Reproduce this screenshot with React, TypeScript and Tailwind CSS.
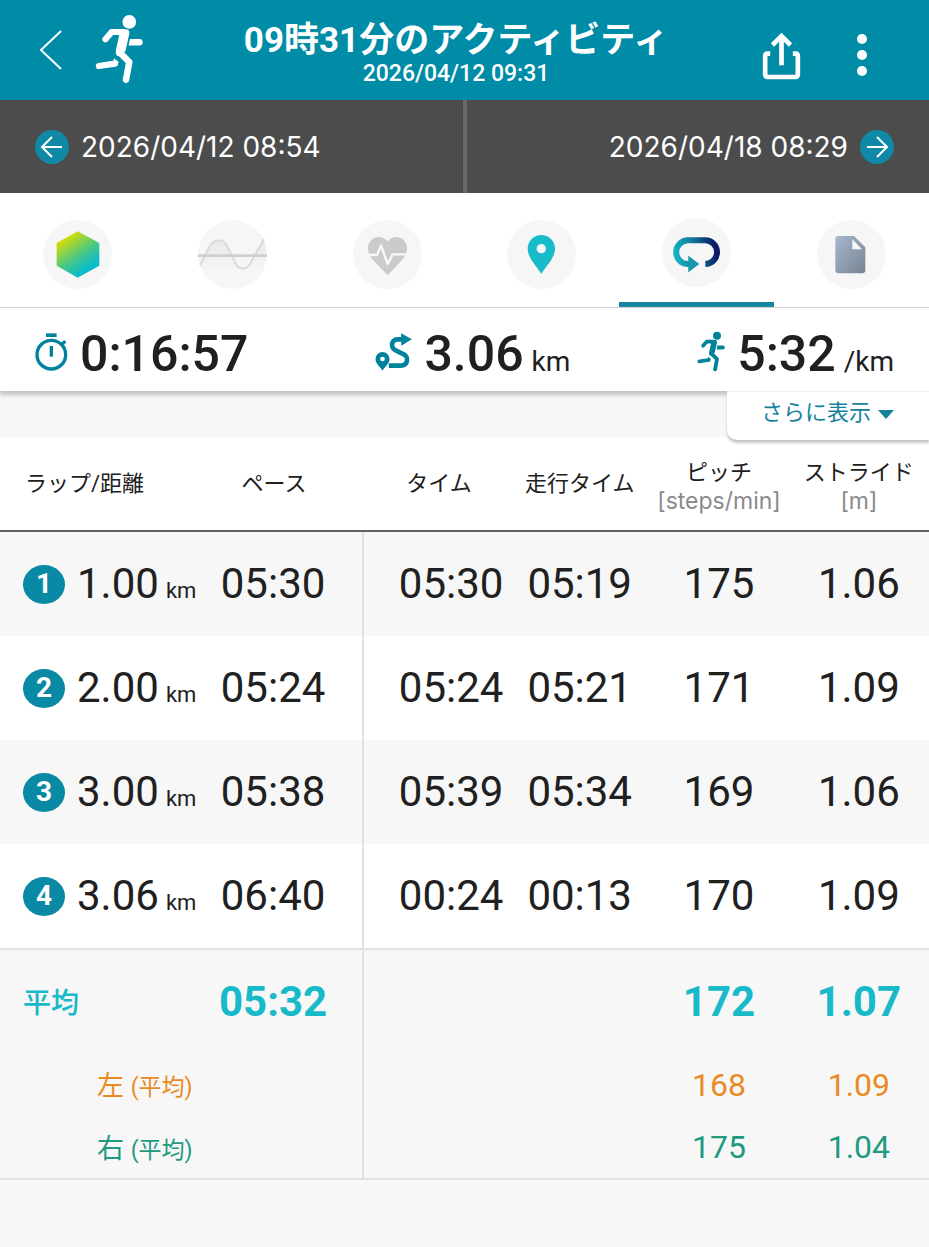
import React from 'react';

type Lap = {
  lap: number;
  distance: string;
  pace: string;
  time: string;
  runTime: string;
  pitch: string;
  stride: string;
};

const laps: Lap[] = [
  { lap: 1, distance: '1.00', pace: '05:30', time: '05:30', runTime: '05:19', pitch: '175', stride: '1.06' },
  { lap: 2, distance: '2.00', pace: '05:24', time: '05:24', runTime: '05:21', pitch: '171', stride: '1.09' },
  { lap: 3, distance: '3.00', pace: '05:38', time: '05:39', runTime: '05:34', pitch: '169', stride: '1.06' },
  { lap: 4, distance: '3.06', pace: '06:40', time: '00:24', runTime: '00:13', pitch: '170', stride: '1.09' },
];

const sides = [
  { label: '左', pitch: '168', stride: '1.09', color: 'text-[#ea8a24]' },
  { label: '右', pitch: '175', stride: '1.04', color: 'text-[#1f9a80]' },
];

const RunnerIcon = ({ className }: { className: string }) => (
  <svg viewBox="284 42 147 212" className={className} fill="none" stroke="currentColor" strokeLinecap="round" strokeLinejoin="round" aria-hidden="true">
    <circle cx="389" cy="65" r="21" fill="currentColor" stroke="none" />
    <path d="M316 118 L335 96 H372" strokeWidth="19" />
    <path d="M352 88 H382 Q391 90 389 101 L377 155 L352 170 Q345 162 348 152 L358 106 Z" fill="currentColor" stroke="none" />
    <path d="M359 158 L389 188 L379 242" strokeWidth="20" />
    <path d="M296 200 L345 193" strokeWidth="19" />
    <path d="M342 176 L357 188 L350 200 L338 198 Z" fill="currentColor" stroke="none" />
    <path d="M391 117 H420 A10 10 0 0 1 420 137 H387 Z" fill="currentColor" stroke="none" />
  </svg>
);

const StopwatchIcon = () => (
  <svg viewBox="104 402 99 114" className="h-[38px] w-[33px]" fill="none" stroke="currentColor" aria-hidden="true">
    <circle cx="153" cy="467" r="43" strokeWidth="10" />
    <path d="M137 408.500 H169" strokeWidth="11" />
    <path d="M153 441 V473" strokeWidth="10" />
    <path d="M184 436 L195 427" strokeWidth="10" />
  </svg>
);

const RouteIcon = () => (
  <svg viewBox="199 402 110 114" className="h-[38px] w-[37px]" fill="none" stroke="currentColor" aria-hidden="true">
    <path d="M221 459 a21 21 0 0 1 21 21 c0 14 -13 22 -21 35 c-8 -13 -21 -21 -21 -35 a21 21 0 0 1 21 -21 Z M221 473 a7 7 0 1 0 0 14 a7 7 0 0 0 0 -14 Z" fill="currentColor" fillRule="evenodd" stroke="none" />
    <path d="M240 500 H276 C298 500 301 472 283 465 L262 455 C243 446 247 421 266 421 H280" strokeWidth="14" />
    <path d="M277 403 L309 421 L277 440 Z" fill="currentColor" stroke="none" />
  </svg>
);

const Disc = ({ children }: { children: React.ReactNode }) => (
  <svg viewBox="0 0 207 207" className="h-[69px] w-[69px]" fill="none" aria-hidden="true">
    <circle cx="103.5" cy="103.5" r="103.5" fill="#f6f6f6" />
    {children}
  </svg>
);

const OverviewIcon = () => (
  <Disc>
    <defs>
      <linearGradient id="hex" x1="0.2" y1="0.05" x2="0.75" y2="0.9">
        <stop offset="0.1" stopColor="#cfdc0c" />
        <stop offset="0.55" stopColor="#4cc881" />
        <stop offset="0.9" stopColor="#0bbccb" />
      </linearGradient>
    </defs>
    <path d="M104 34 L169 69 V137 L104 173 L41 137 V69 Z" fill="url(#hex)" />
  </Disc>
);

const WaveIcon = () => (
  <Disc>
    <defs>
      <linearGradient id="wave" x1="0" y1="0" x2="0" y2="1">
        <stop offset="0" stopColor="#e8e8e8" />
        <stop offset="1" stopColor="#f6f6f6" />
      </linearGradient>
    </defs>
    <path d="M6 136 L34 80 C46 56 76 56 86 76 L110 124 C120 152 146 152 158 128 L198 57 L206 104 L194 154 H14 Z" fill="url(#wave)" />
    <path d="M6 136 L34 80 C46 56 76 56 86 76 L110 124 C120 152 146 152 158 128 L198 57" stroke="#dadada" strokeWidth="6" />
    <path d="M0 107 H207" stroke="#cfcfcf" strokeWidth="8" />
  </Disc>
);

const HeartIcon = () => (
  <Disc>
    <path d="M104 166 L58 118 C49 108 45 98 45 84 C45 54 84 38 104 65 C124 38 162 54 162 84 C162 98 158 108 149 118 Z" fill="#cbcbcb" />
    <path d="M45 105 H72 L84 76 L104 132 L119 103 H164" stroke="#f8f8f8" strokeWidth="7" strokeLinejoin="round" />
  </Disc>
);

const PinIcon = () => (
  <Disc>
    <path d="M103 45 a41 41 0 0 1 41 41 C144 112 120 136 103 161 C86 136 62 112 62 86 A41 41 0 0 1 103 45 Z M103 72 a14 14 0 1 0 0 28 a14 14 0 0 0 0 -28 Z" fill="#18bbca" fillRule="evenodd" />
  </Disc>
);

const LapIcon = () => (
  <Disc>
    <defs>
      <linearGradient id="lap" gradientUnits="userSpaceOnUse" x1="34" y1="120" x2="173" y2="90">
        <stop offset="0" stopColor="#16b9c6" />
        <stop offset="0.45" stopColor="#127f9f" />
        <stop offset="0.9" stopColor="#0b1c66" />
      </linearGradient>
    </defs>
    <path d="M130 138 A35.500 35.500 0 0 0 129 67 H78 a35.500 35.500 0 0 0 0 71 h4" stroke="url(#lap)" strokeWidth="18" />
    <path d="M79 113 L112 138 L79 163 Z" fill="#1696ad" />
  </Disc>
);

const MemoIcon = () => (
  <Disc>
    <defs>
      <linearGradient id="memo" x1="0" y1="0" x2="1" y2="1">
        <stop offset="0" stopColor="#a6b7d0" />
        <stop offset="1" stopColor="#778491" />
      </linearGradient>
    </defs>
    <path d="M65 48 H111 L145 82 V150 Q145 160 135 160 H65 Q55 160 55 150 V58 Q55 48 65 48 Z" fill="url(#memo)" />
    <path d="M106 58 L135 88 H106 Z" fill="#f8f8f8" />
  </Disc>
);

const tabs = [
  { label: '概要', icon: <OverviewIcon /> },
  { label: 'グラフ', icon: <WaveIcon /> },
  { label: '心拍', icon: <HeartIcon /> },
  { label: '地図', icon: <PinIcon /> },
  { label: 'ラップ', icon: <LapIcon /> },
  { label: 'メモ', icon: <MemoIcon /> },
];

const ArrowDisc = ({ d }: { d: string }) => (
  <svg viewBox="0 0 34 34" className="h-[34px] w-[34px]" fill="none" aria-hidden="true">
    <circle cx="17" cy="17" r="17" fill="#0f89a6" />
    <path d={d} stroke="white" strokeWidth="2" />
  </svg>
);

const Header = () => (
  <header className="flex h-[100px] items-start bg-[#008ba7] text-white">
    <div className="flex w-[150px] items-start pt-3.5 pl-[39px]">
      <button type="button" aria-label="戻る" className="pt-4">
        <svg viewBox="0 0 23 40" className="h-10 w-[23px]" fill="none" stroke="currentColor" strokeWidth="2" aria-hidden="true">
          <path d="M22 1 L2 20 L22 39" />
        </svg>
      </button>
      <RunnerIcon className="ml-[33px] h-[70px] w-12" />
    </div>
    <div className="flex-1 pt-[23px] text-center whitespace-nowrap">
      <h1 className="text-[35px] leading-9 font-bold">09時31分のアクティビティ</h1>
      <p className="text-[23px] leading-[30px] font-medium">2026/04/12 09:31</p>
    </div>
    <div className="flex w-[167px] items-center gap-[55px] pt-8">
      <button type="button" aria-label="共有">
        <svg viewBox="215 95 116 144" className="h-12 w-[39px]" fill="none" stroke="currentColor" strokeWidth="14" aria-hidden="true">
          <path d="M239 160 H231 Q224 160 224 167 V222 Q224 230 232 230 H314 Q322 230 322 222 V167 Q322 160 315 160 H307" />
          <path d="M273 195 V108 M246 134 L273 107 L300 134" />
        </svg>
      </button>
      <button type="button" aria-label="メニュー">
        <svg viewBox="0 0 12 48" className="h-12 w-3" fill="currentColor" aria-hidden="true">
          <circle cx="6" cy="7" r="5" />
          <circle cx="6" cy="23" r="5" />
          <circle cx="6" cy="39" r="5" />
        </svg>
      </button>
    </div>
  </header>
);

const Stat = ({ icon, value, unit }: { icon: React.ReactNode; value: string; unit?: string }) => (
  <div className="flex items-center gap-3 text-[#00819c]">
    {icon}
    <p className="flex items-baseline gap-2 pt-1 text-[50px] leading-[60px] font-medium text-[#202020]">
      {value}
      {unit && <span className="text-[28px] leading-none font-normal">{unit}</span>}
    </p>
  </div>
);

const App: React.FC = () => {
  return (
    <div className="min-h-screen bg-[#f7f7f7] font-[Roboto,'Noto_Sans_CJK_JP',sans-serif] text-[#202020]">
      <Header />

      <nav className="flex h-[93px] bg-[#4c4c4c] font-[Inter,sans-serif] text-[28px] text-white">
        <a href="#prev" className="flex flex-1 items-center gap-3 border-r-4 border-[#686868] pl-[35px]">
          <ArrowDisc d="M27 17 H8 M17 7 L7 17 L17 27" />
          2026/04/12 08:54
        </a>
        <a href="#next" className="flex flex-1 items-center justify-end gap-3 pr-[35px]">
          2026/04/18 08:29
          <ArrowDisc d="M7 17 H26 M17 7 L27 17 L17 27" />
        </a>
      </nav>

      <div role="tablist" className="grid h-[115px] grid-cols-6 border-b border-[#d4d4d4] bg-white">
        {tabs.map((tab, i) => (
          <button
            key={tab.label}
            type="button"
            role="tab"
            aria-label={tab.label}
            aria-selected={i === 4}
            className={`flex justify-center ${i === 4 ? 'border-b-[5px] border-[#15859f] pt-[25px]' : 'pt-[27px]'}`}
          >
            {tab.icon}
          </button>
        ))}
      </div>

      <section className="relative flex h-[83px] items-center justify-between bg-white px-[35px] pt-1 shadow-[0_3px_4px_1px_#c4c4c4]">
        <Stat icon={<StopwatchIcon />} value="0:16:57" />
        <Stat icon={<RouteIcon />} value="3.06" unit="km" />
        <Stat icon={<RunnerIcon className="h-[41px] w-7" />} value="5:32" unit="/km" />
        <button
          type="button"
          className="absolute top-full right-0 flex h-[49px] items-center gap-[7px] rounded-bl-[10px] border-t border-[#f0f0f0] bg-white pr-[35px] pb-2 pl-[34px] text-[22px] text-[#15829c] shadow-[0_3px_3px_#c4c4c4]"
        >
          さらに表示
          <svg viewBox="0 0 16 9" className="mt-1 h-[9px] w-4" fill="currentColor" aria-hidden="true">
            <path d="M0 0 H16 L8 9 Z" />
          </svg>
        </button>
      </section>

      <table className="mt-[46px] w-full table-fixed border-separate border-spacing-0 whitespace-nowrap">
        <colgroup>
          <col className="w-[22.6%]" />
          <col className="w-[16.6%]" />
          <col className="w-[15.7%]" />
          <col className="w-[15%]" />
          <col className="w-[15%]" />
          <col className="w-[15.1%]" />
        </colgroup>
        <thead className="bg-white text-[22px] leading-7">
          <tr className="h-[95px] [&>th]:border-b-2 [&>th]:border-[#616161]">
            <th className="pl-[25px] text-left font-normal">ラップ/距離</th>
            <th className="pr-[26px] font-normal">ペース</th>
            <th className="pl-1 font-normal">タイム</th>
            <th className="font-normal">走行タイム</th>
            <th className="pt-1.5 font-normal">
              ピッチ
              <span className="block font-[Inter,sans-serif] text-[23px] text-[#8a8a8a]">[steps/min]</span>
            </th>
            <th className="pt-1.5 font-normal">
              ストライド
              <span className="block font-[Inter,sans-serif] text-[23px] text-[#8a8a8a]">[m]</span>
            </th>
          </tr>
        </thead>
        <tbody className="text-center text-[42px] leading-[48px]">
          {laps.map((row) => (
            <tr key={row.lap} className="h-[104px] odd:bg-[#f7f7f7] even:bg-white">
              <td className="pl-[23px]">
                <div className="flex items-center">
                  <span className="flex h-[39px] w-[42px] items-center justify-center rounded-[50%] bg-[#0a89a5] text-[28px] font-bold text-white">
                    {row.lap}
                  </span>
                  <span className="ml-3 flex items-baseline gap-[7px]">
                    {row.distance}
                    <span className="text-[22px] leading-none">km</span>
                  </span>
                </div>
              </td>
              <td className="border-r-2 border-[#e2e2e2] pr-[26px]">{row.pace}</td>
              <td className="pl-7">{row.time}</td>
              <td>{row.runTime}</td>
              <td>{row.pitch}</td>
              <td>{row.stride}</td>
            </tr>
          ))}
        </tbody>
        <tfoot className="text-center">
          <tr className="h-[105px] text-[42px] font-bold text-[#18bac9] [&>*]:border-t-2 [&>*]:border-[#e2e2e2]">
            <th className="pt-1 pl-[23px] text-left text-[28px] font-medium">平均</th>
            <td className="border-r-2 pr-[26px]">05:32</td>
            <td />
            <td />
            <td>172</td>
            <td>1.07</td>
          </tr>
          {sides.map((side) => (
            <tr key={side.label} className={`h-[63px] text-[32px] last:h-16 [&>*]:border-[#e2e2e2] last:[&>*]:border-b-2 ${side.color}`}>
              <th className="pt-1 pl-[97px] text-left text-[27px] font-normal">
                {side.label} <span className="text-[23px]">(平均)</span>
              </th>
              <td className="border-r-2" />
              <td />
              <td />
              <td>{side.pitch}</td>
              <td>{side.stride}</td>
            </tr>
          ))}
        </tfoot>
      </table>
    </div>
  );
};

export default App;
